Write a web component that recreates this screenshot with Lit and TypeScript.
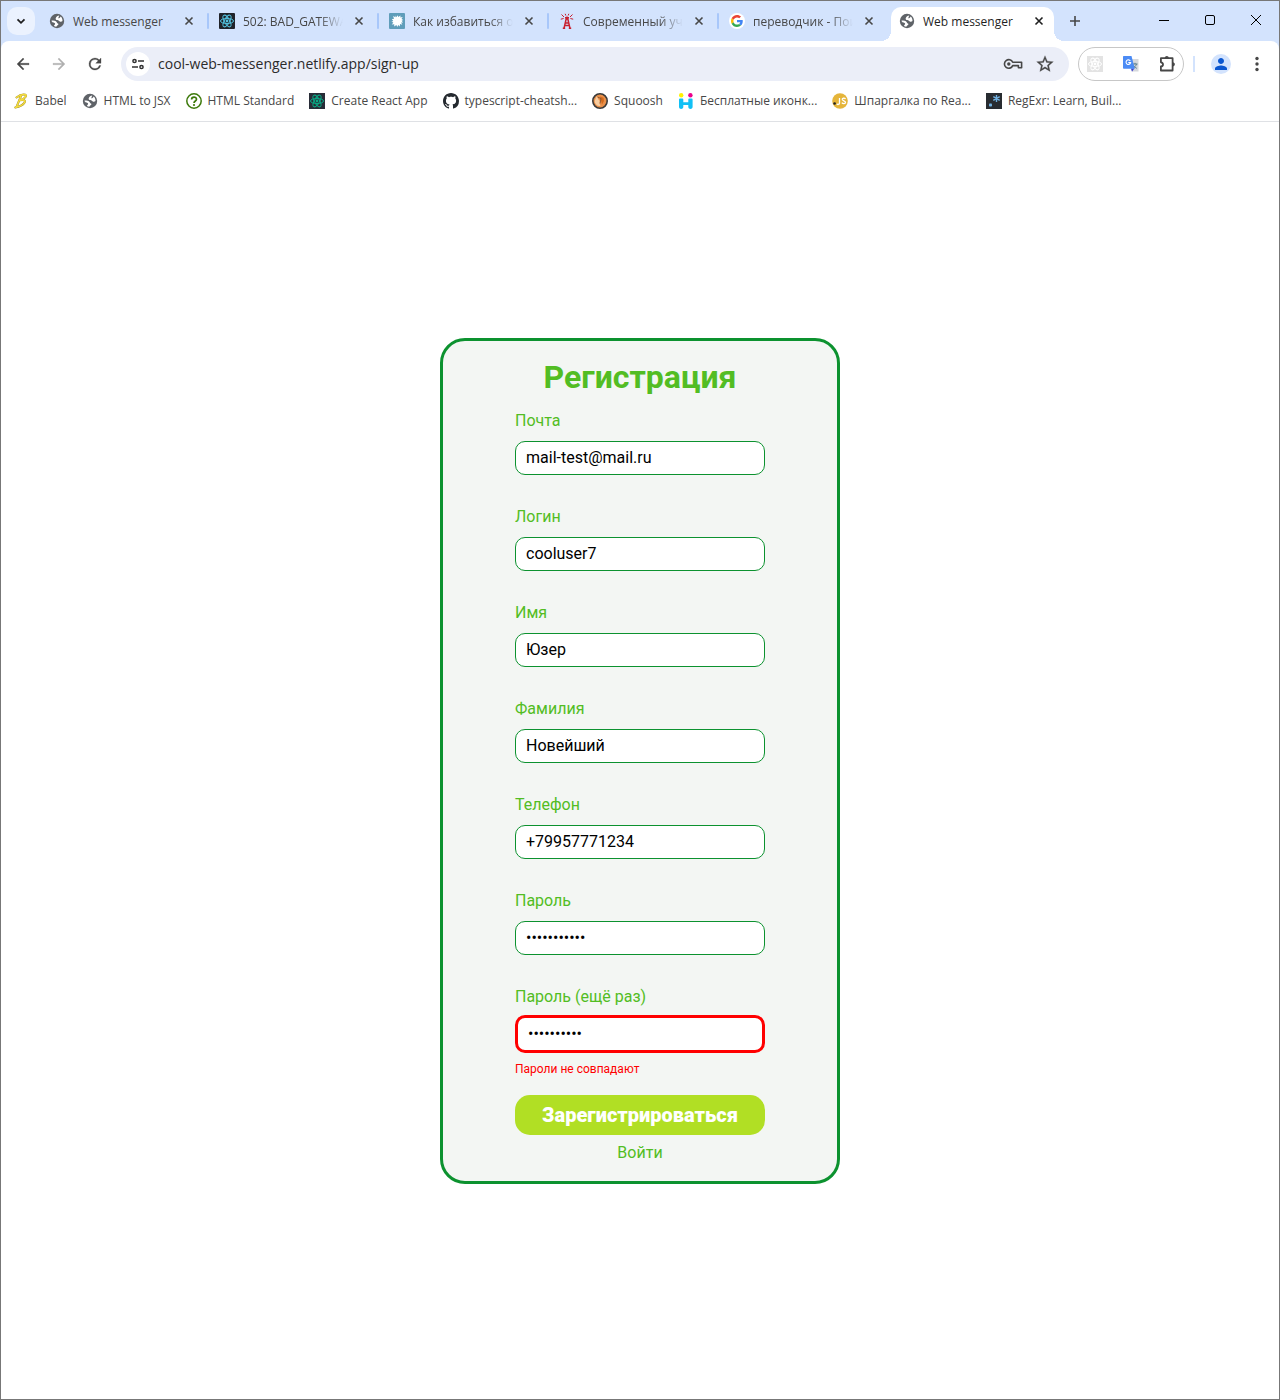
import { LitElement, html, css, svg, nothing } from "lit";
import { customElement, property } from "lit/decorators.js";
import { classMap } from "lit/directives/class-map.js";

const box = (size: number, view: string, body: unknown) =>
  html`<svg width=${size} height=${size} viewBox=${view} aria-hidden="true">${body}</svg>`;

const reactMark = (color: string) => svg`
  <g fill="none" stroke=${color} stroke-width="1">
    <ellipse cx="8" cy="8" rx="6.500" ry="2.600"/>
    <ellipse cx="8" cy="8" rx="6.500" ry="2.600" transform="rotate(60 8 8)"/>
    <ellipse cx="8" cy="8" rx="6.500" ry="2.600" transform="rotate(120 8 8)"/>
  </g>
  <circle cx="8" cy="8" r="1.400" fill=${color}/>`;

const icons: Record<string, unknown> = {
  globe: box(16, "0 0 16 16", svg`
    <circle cx="8" cy="8" r="7.200" fill="#5f6368"/>
    <path d="M10.200 2.600C8.700 2.800 7.400 3.600 6.800 4.900c-.5 1.200.2 2.100 1.500 2.200 1.500.1 1.600 1.500 3 1.700 1 .1 1.700-.2 2.200-.7.100-2-.6-3.600-1.900-4.600-.3 1.200-1.100 1.800-2.400 1.800z" fill="#fff"/>
    <path d="M2.400 7.700c1.500-.4 3.400-.2 4.500.6 1.100.8.900 1.900 2 2.300.8.300.6 1.300-.2 1.700-.9.500-1.100.9-1.300 1.500-.9 0-1.700-.3-2.400-.7.200-1.100 1.200-1.400 1.100-2.500C6 9.400 3.300 10.200 2.400 7.700z" fill="#fff"/>`),
  reactBlue: box(16, "0 0 16 16", svg`<rect width="16" height="16" rx="1" fill="#20232a"/>${reactMark("#53c1de")}`),
  reactGreen: box(16, "0 0 16 16", svg`<rect width="16" height="16" fill="#282c37"/>${reactMark("#09a884")}`),
  reactGray: box(16, "0 0 16 16", svg`<rect width="16" height="16" fill="#e3e3e3"/>${reactMark("#fff")}`),
  splat: box(16, "0 0 16 16", svg`<rect width="16" height="16" rx="1" fill="#5f9dba"/>
    <path d="M7.500 4.200L8.600 2.300 9.300 4l2.200-1.500-.2 2 2.400-.5-1.200 2 1.800.9-1.700.9 1.500 1.600-2 .1 1.200 2.200-2.300-.7-.2 2.400-1.600-1.500-.9 2-.9-2-2.200 1.600.1-2.300-2.500.2 1.600-1.800-2-.8 1.900-.9L2.800 6l2.100.1L4.200 3l2.200 1.200L6.800 2.500z" fill="#fff"/>`),
  tower: box(16, "0 0 16 16", svg`<g fill="none" stroke="#c8202f" stroke-width="1.500">
    <path d="M5 15.300l2.200-9.500h1.600l2.200 9.500M6.400 10h3.200M5.800 12.500h4.400M3.800 15.300h2.400M9.800 15.300h2.400"/>
    <path d="M6 4.800h4M8 3.500v3" stroke-width="1.500"/>
    <path d="M5 4L2.500 1.500M4.600 5.500L1.800 6.200M11 4l2.500-2.500M11.400 5.500l2.800.7M6.800 2.500L6.200.8M9.200 2.500l.6-1.700" stroke-width="1"/></g>`),
  google: box(16, "0 0 16 16", svg`<circle cx="8" cy="8" r="8" fill="#fff"/>
    <g transform="translate(2 2) scale(.25)">
    <path fill="#ea4335" d="M24 9.500c3.540 0 6.710 1.220 9.210 3.600l6.850-6.850C35.900 2.380 30.470 0 24 0 14.620 0 6.510 5.380 2.560 13.220l7.980 6.190C12.430 13.720 17.740 9.500 24 9.500z"/>
    <path fill="#4285f4" d="M46.980 24.550c0-1.570-.15-3.090-.38-4.550H24v9.020h12.940c-.58 2.960-2.260 5.480-4.780 7.180l7.730 6c4.510-4.180 7.090-10.360 7.090-17.650z"/>
    <path fill="#fbbc05" d="M10.530 28.590c-.48-1.450-.76-2.990-.76-4.590s.27-3.140.76-4.590l-7.980-6.190C.92 16.460 0 20.120 0 24s.92 7.540 2.560 10.780l7.970-6.190z"/>
    <path fill="#34a853" d="M24 48c6.480 0 11.930-2.130 15.890-5.810l-7.730-6c-2.150 1.450-4.920 2.300-8.160 2.300-6.260 0-11.570-4.220-13.470-9.910l-7.980 6.190C6.510 42.620 14.620 48 24 48z"/></g>`),
  babel: box(16, "0 0 16 16", svg`<g fill="none" stroke-linecap="round" stroke-linejoin="round" transform="translate(1 0)">
    <path d="M2.500 4.500C5 2.500 9 1 11.500 1.800c1.800.8-1 4.200-5.200 5.400 3.700-.6 5.700.3 4 2.700-1.500 2.200-5 3.800-9 4.600M7 3L2.500 14" stroke="#9a8a2c" stroke-width="2"/>
    <path d="M2.500 4.500C5 2.500 9 1 11.500 1.800c1.800.8-1 4.200-5.200 5.400 3.700-.6 5.700.3 4 2.700-1.500 2.200-5 3.800-9 4.600M7 3L2.500 14" stroke="#f5dc3c" stroke-width="1.500"/></g>`),
  question: box(16, "0 0 16 16", svg`<circle cx="8" cy="8" r="7.200" fill="none" stroke="#3c790a" stroke-width="1.500"/>
    <path d="M5.600 6.500C5.600 3.300 10.500 3.300 10.500 6.300 10.500 8 8 8 8 10" fill="none" stroke="#3c790a" stroke-width="1.700"/><circle cx="8" cy="12" r="1.100" fill="#3c790a"/>`),
  github: box(16, "0 0 16 16", svg`<path fill="#24292f" d="M8 0C3.580 0 0 3.580 0 8c0 3.540 2.290 6.530 5.470 7.590.4.070.55-.17.55-.38 0-.19-.01-.82-.01-1.490-2.010.37-2.530-.49-2.690-.94-.09-.23-.48-.94-.82-1.130-.28-.15-.68-.52-.01-.53.63-.01 1.080.58 1.230.82.72 1.210 1.870.87 2.330.66.07-.52.28-.87.51-1.070-1.780-.2-3.640-.89-3.640-3.950 0-.87.31-1.590.82-2.150-.08-.2-.36-1.020.08-2.120 0 0 .67-.21 2.200.82.64-.18 1.320-.27 2-.27s1.360.09 2 .27c1.530-1.040 2.200-.82 2.200-.82.44 1.100.16 1.920.08 2.120.51.56.82 1.270.82 2.150 0 3.070-1.870 3.750-3.650 3.950.29.25.54.73.54 1.480 0 1.070-.01 1.930-.01 2.200 0 .21.15.46.55.38A8.010 8.010 0 0 0 16 8c0-4.420-3.580-8-8-8z"/>`),
  squoosh: box(16, "0 0 16 16", svg`<circle cx="8" cy="8" r="7.200" fill="#e9904a" stroke="#3a3a3a" stroke-width="1.600"/>
    <path d="M4.500 3.500c1.500 0 1 2.500 2.500 3.500s0 3 1.500 6C5 13.500 3 11 2.600 8z" fill="#f8cda0"/><path d="M8 3.500l3.500 1.300L12 8l-2 3.500-1-4z" fill="#d46a1c"/><path d="M5.500 4l3.500 1.500-1 5" stroke="#7b4a2a" fill="none" stroke-width=".8"/>`),
  people: box(16, "0 0 16 16", svg`<circle cx="3.200" cy="2.300" r="2.200" fill="#fff200"/><circle cx="12.400" cy="2.300" r="2.200" fill="#ec008c"/>
    <path d="M1 6.500q0-1 1-1h2.300q1 0 1 1v2.800h5V6.500q0-1 1-1h2.300q1 0 1 1V14c0 2.600-4.300 2.600-4.300 0v-2h-5v2C5.300 16.600 1 16.600 1 14z" fill="#12c0f5"/>`),
  js: box(16, "0 0 16 16", svg`<circle cx="8" cy="8" r="7.800" fill="#e5b53a"/>
    <path d="M7.500 5v5c0 1.800-2 1.800-2.600.8M13.500 6c-1-1.300-3.500-.9-3.200.7.300 1.300 3.200 1 3.200 2.600 0 1.700-2.700 1.700-3.700.3" fill="none" stroke="#fff" stroke-width="1.300"/><circle cx="2.600" cy="10.500" r="1.300" fill="#222"/>`),
  regexr: box(16, "0 0 16 16", svg`<rect width="16" height="16" fill="#282c31"/><rect x="3" y="10.500" width="3" height="3" rx=".8" fill="#70b0e0"/>
    <path d="M10.500 2v7M7.300 3.700l6.400 3.600M13.700 3.700L7.300 7.300" stroke="#70b0e0" stroke-width="1.400"/>`),
  chevron: box(16, "0 0 16 16", svg`<path d="M4.500 6.300L8 9.800l3.500-3.500" fill="none" stroke="#1f1f1f" stroke-width="1.800"/>`),
  cross: box(16, "0 0 16 16", svg`<path d="M4.500 4.500l7 7M11.500 4.500l-7 7" stroke="currentColor" stroke-width="1.600"/>`),
  plus: box(16, "0 0 16 16", svg`<path d="M8 3v10M3 8h10" stroke="#474747" stroke-width="1.600"/>`),
  minimize: box(12, "0 0 12 12", svg`<path d="M1 6.500h10" stroke="#000"/>`),
  maximize: box(12, "0 0 12 12", svg`<rect x="1.500" y="1.500" width="9" height="9" rx="1.500" fill="none" stroke="#000"/>`),
  close: box(12, "0 0 12 12", svg`<path d="M1 1l10 10M11 1L1 11" stroke="#000"/>`),
  back: box(18, "0 0 24 24", svg`<path stroke="#474747" stroke-width=".4" fill="#474747" d="M20 11H7.830l5.590-5.590L12 4l-8 8 8 8 1.410-1.410L7.830 13H20z"/>`),
  forward: box(18, "0 0 24 24", svg`<path stroke="#b0b0b0" stroke-width=".4" fill="#b0b0b0" d="M12 4l-1.410 1.410L16.170 11H4v2h12.170l-5.580 5.590L12 20l8-8z"/>`),
  reload: box(18, "0 0 24 24", svg`<path stroke="#474747" stroke-width=".4" fill="#474747" d="M17.650 6.350A7.958 7.958 0 0 0 12 4a8 8 0 1 0 7.730 10h-2.080A6 6 0 1 1 12 6c1.660 0 3.140.69 4.220 1.780L13 11h7V4z"/>`),
  tune: box(16, "0 0 16 16", svg`<g fill="none" stroke="#303030" stroke-width="1.500"><circle cx="4.500" cy="5" r="1.600"/><path d="M8 5h6M2 11h6"/><circle cx="11.500" cy="11" r="1.600"/></g>`),
  key: box(20, "0 0 20 20", svg`<g fill="none" stroke="#474747" stroke-width="1.600" stroke-linejoin="round"><path d="M9.700 8.300h8.900v5.500h-3.200v-2.200H9.700a4.300 4.300 0 1 1 0-3.300z"/></g><circle cx="5.800" cy="10" r="1.700" fill="#474747"/>`),
  star: box(20, "0 0 24 24", svg`<path fill="#474747" stroke="#474747" stroke-width=".3" d="M22 9.240l-7.190-.62L12 2 9.190 8.630 2 9.240l5.460 4.730L5.820 21 12 17.270 18.180 21l-1.630-7.030zM12 15.400l-3.760 2.270 1-4.280-3.320-2.880 4.380-.38L12 6.100l1.710 4.040 4.380.38-3.320 2.880 1 4.280z"/>`),
  translate: box(16, "0 0 16 16", svg`<path d="M6 3h9.500v12.500H9z" fill="#d5d8dc"/><path d="M9.500 8h5M12 6.800V8M13.500 8c-.6 2-1.800 3.200-3.500 4.200M10.500 9.300c.8 1.500 1.800 2.300 3.300 3" stroke="#5b7f8d" fill="none" stroke-width="1"/><path d="M8 12.500h3.300L9 15.800z" fill="#3b3fc9"/>
    <path d="M1 0h7.500l3.300 12.800H1c-.6 0-1-.4-1-1V1c0-.6.4-1 1-1z" fill="#4b8bf5"/><path d="M7.300 4.900A2.300 2.300 0 1 0 7.600 6.600H5.300" fill="none" stroke="#fff" stroke-width="1.100"/>`),
  puzzle: box(20, "0 0 20 20", svg`<path d="M3.900 4.200h11.700v12.300H3.900v-4c2.800-.4 2.800-3.800 0-4.200z" fill="none" stroke="#474747" stroke-width="1.800" stroke-linejoin="round"/><path d="M7.700 4.200c.2-3 4-3 4.200 0zM15.700 8.200c2.900.2 2.900 4 0 4.200z" fill="#474747"/>`),
  person: box(18, "0 0 24 24", svg`<path fill="#0b57d0" d="M12 12c2.210 0 4-1.790 4-4s-1.790-4-4-4-4 1.790-4 4 1.790 4 4 4zm0 2c-2.670 0-8 1.340-8 4v2h16v-2c0-2.660-5.330-4-8-4z"/>`),
  dots: box(16, "0 0 16 16", svg`<g fill="#474747"><circle cx="8" cy="2.500" r="1.700"/><circle cx="8" cy="8" r="1.700"/><circle cx="8" cy="13.500" r="1.700"/></g>`),
};

interface Tab { icon: string; title: string; active?: boolean; fades?: boolean; }

const tabs: Tab[] = [
  { icon: "globe", title: "Web messenger" },
  { icon: "reactBlue", title: "502: BAD_GATEWA", fades: true },
  { icon: "splat", title: "Как избавиться от", fades: true },
  { icon: "tower", title: "Современный уче", fades: true },
  { icon: "google", title: "переводчик - Пои", fades: true },
  { icon: "globe", title: "Web messenger", active: true },
];

const bookmarks = [
  ["babel", "Babel"],
  ["globe", "HTML to JSX"],
  ["question", "HTML Standard"],
  ["reactGreen", "Create React App"],
  ["github", "typescript-cheatsh..."],
  ["squoosh", "Squoosh"],
  ["people", "Бесплатные иконк..."],
  ["js", "Шпаргалка по Rea..."],
  ["regexr", "RegExr: Learn, Buil..."],
];

const chromeFont = css`"Segoe UI", "Open Sans", "Noto Sans", sans-serif`;

@customElement("browser-tabs")
class BrowserTabs extends LitElement {
  static styles = css`
    :host { display: flex; align-items: flex-start; height: 40px; padding-left: 6px; background: #d3e3fd; font: 500 12px/16px ${chromeFont}; color: #474747; }
    button { display: grid; place-items: center; padding: 0; border: 0; background: none; color: inherit; flex: none; }
    .search { width: 28px; height: 28px; margin: 6px 6px 0 0; border-radius: 10px; background: #ebf2fe; }
    .tab { display: flex; align-items: center; flex: 0 1 170px; min-width: 0; height: 34px; margin-top: 6px; }
    .body { position: relative; display: flex; align-items: center; flex: 1; min-width: 0; height: 34px; padding: 0 7px 6px 8px; box-sizing: border-box; gap: 8px; }
    .body svg { flex: none; }
    .title { flex: 1; min-width: 0; overflow: hidden; white-space: nowrap; line-height: 18px; padding-top: 2px; }
    .fades { mask-image: linear-gradient(to right, #000 calc(100% - 24px), transparent); }
    .close { width: 16px; height: 16px; }
    .divider { flex: none; width: 2px; height: 16px; margin: 0 2px 6px 3px; background: #a8c7fa; border-radius: 1px; }
    .hidden { visibility: hidden; }
    .active .body { background: #fff; border-radius: 10px 10px 0 0; color: #1f1f1f; }
    .active .body::before, .active .body::after { content: ""; position: absolute; bottom: 0; width: 10px; height: 10px; }
    .active .body::before { right: 100%; background: radial-gradient(circle at 0 0, transparent 10px, #fff 10px); }
    .active .body::after { left: 100%; background: radial-gradient(circle at 100% 0, transparent 10px, #fff 10px); }
    .new { width: 28px; height: 28px; margin: 6px 0 0; }
    .window { display: flex; margin-left: auto; }
    .window button { width: 46px; height: 38px; }
  `;
  render() {
    return html`
      <button class="search" aria-label="Search tabs">${icons.chevron}</button>
      ${tabs.map((tab, i) => html`
        <div class=${classMap({ tab: true, active: !!tab.active })}>
          <div class="body">
            ${icons[tab.icon]}<span class=${classMap({ title: true, fades: !!tab.fades })}>${tab.title}</span>
            <button class="close" aria-label="Close tab">${icons.cross}</button>
          </div>
          <span class=${classMap({ divider: true, hidden: i > tabs.length - 3 })}></span>
        </div>`)}
      <button class="new" aria-label="New tab">${icons.plus}</button>
      <div class="window">
        <button aria-label="Minimize">${icons.minimize}</button>
        <button aria-label="Maximize">${icons.maximize}</button>
        <button aria-label="Close">${icons.close}</button>
      </div>`;
  }
}

@customElement("browser-toolbar")
class BrowserToolbar extends LitElement {
  static styles = css`
    :host { display: block; background: #d3e3fd; font: 500 12px/16px ${chromeFont}; color: #474747; }
    .panel { background: #fff; border-radius: 8px 8px 0 0; border-bottom: 1px solid #dfe1e5; }
    button { display: grid; place-items: center; padding: 0; border: 0; background: none; width: 28px; height: 28px; flex: none; }
    .bar { display: flex; align-items: center; gap: 8px; padding: 6px 8px; }
    .address { display: flex; align-items: center; flex: 1; min-width: 0; height: 34px; margin: 0 1px 0 4px; padding: 0 10px 0 5px; border-radius: 17px; background: #ebeef8; box-sizing: border-box; gap: 4px; }
    .site { width: 24px; height: 24px; border-radius: 50%; background: #fff; }
    .url { flex: 1; min-width: 0; margin-left: 4px; padding: 0; border: 0; outline: 0; background: none; color: #2b2b2b; font: 14px/20px ${chromeFont}; }
    .extensions { display: flex; align-items: center; gap: 8px; height: 34px; padding: 0 2px; border: 1px solid #c7c7c7; border-radius: 17px; box-sizing: border-box; }
    .divider { width: 2px; height: 16px; margin: 0 4px 0 1px; background: #d3e3fd; }
    .profile { width: 20px; height: 20px; margin: 0 4px; border-radius: 50%; background: #d3e3fd; }
    .bookmarks { display: flex; gap: 15px; padding: 0 12px; height: 28px; align-items: center; margin-bottom: 6px; }
    .bookmark { display: flex; align-items: center; gap: 6px; color: inherit; text-decoration: none; white-space: nowrap; }
  `;
  render() {
    return html`<div class="panel">
      <div class="bar">
        <button aria-label="Back">${icons.back}</button>
        <button aria-label="Forward" disabled>${icons.forward}</button>
        <button aria-label="Reload">${icons.reload}</button>
        <div class="address">
          <button class="site" aria-label="Site information">${icons.tune}</button>
          <input class="url" aria-label="Address" .value=${"cool-web-messenger.netlify.app/sign-up"}>
          <button aria-label="Passwords">${icons.key}</button>
          <button aria-label="Bookmark this page">${icons.star}</button>
        </div>
        <div class="extensions">
          <button aria-label="React tools">${icons.reactGray}</button>
          <button aria-label="Translate">${icons.translate}</button>
          <button aria-label="Extensions">${icons.puzzle}</button>
        </div>
        <span class="divider"></span>
        <button class="profile" aria-label="Profile">${icons.person}</button>
        <button aria-label="Menu">${icons.dots}</button>
      </div>
      <nav class="bookmarks">
        ${bookmarks.map(([icon, label]) => html`<a class="bookmark" href="#">${icons[icon]}<span>${label}</span></a>`)}
      </nav>
    </div>`;
  }
}

@customElement("form-field")
class FormField extends LitElement {
  @property() label = "";
  @property() type = "text";
  @property() value = "";
  @property() error = "";
  static styles = css`
    :host { display: grid; grid-template-rows: 26px 48px 22px; align-items: center; font-family: Roboto, sans-serif; }
    label { color: #52bd23; font-size: 16px; line-height: 26px; }
    input { width: 100%; box-sizing: border-box; padding: 0 10px; border: 1px solid #0c922f; border-radius: 10px; background: #fff; color: #000; font: 16px Roboto, sans-serif; height: 34px; outline: 0; }
    .invalid { height: 38px; border: 3px solid #f00; }
    .error { color: #f00; font-size: 12px; line-height: 22px; }
  `;
  render() {
    return html`
      <label for="control">${this.label}</label>
      <input id="control" class=${classMap({ invalid: !!this.error })} type=${this.type} .value=${this.value}>
      ${this.error ? html`<span class="error" role="alert">${this.error}</span>` : nothing}`;
  }
}

@customElement("app-root")
class AppRoot extends LitElement {
  static styles = css`
    :host { display: flex; flex-direction: column; min-height: 100vh; box-sizing: border-box; border: 1px solid #777; background: #fff; font-family: Roboto, sans-serif; }
    main { flex: 1; display: grid; place-items: center; }
    .card { width: 400px; max-width: 100%; box-sizing: border-box; padding: 17px 72px 10px; border: 3px solid #0c922f; border-radius: 25px; background: #f3f6f3; display: flex; flex-direction: column; }
    h1 { margin: 0 0 12px; color: #52bd23; font-size: 32px; line-height: 38px; font-weight: 700; text-align: center; }
    .submit { height: 40px; margin-top: 15px; padding: 0; border: 0; border-radius: 15px; background: #b1df24; color: #fff; font: 900 20px/24px Roboto, sans-serif; }
    .login { align-self: center; color: #52bd23; font-size: 16px; line-height: 36px; text-decoration: none; }
  `;
  render() {
    return html`
      <browser-tabs></browser-tabs>
      <browser-toolbar></browser-toolbar>
      <main>
        <form class="card" @submit=${(e: Event) => e.preventDefault()}>
          <h1>Регистрация</h1>
          <form-field label="Почта" value="mail-test@mail.ru"></form-field>
          <form-field label="Логин" value="cooluser7"></form-field>
          <form-field label="Имя" value="Юзер"></form-field>
          <form-field label="Фамилия" value="Новейший"></form-field>
          <form-field label="Телефон" type="tel" value="+79957771234"></form-field>
          <form-field label="Пароль" type="password" value="password123"></form-field>
          <form-field label="Пароль (ещё раз)" type="password" value="password12" error="Пароли не совпадают"></form-field>
          <button class="submit">Зарегистрироваться</button>
          <a class="login" href="#">Войти</a>
        </form>
      </main>`;
  }
}
